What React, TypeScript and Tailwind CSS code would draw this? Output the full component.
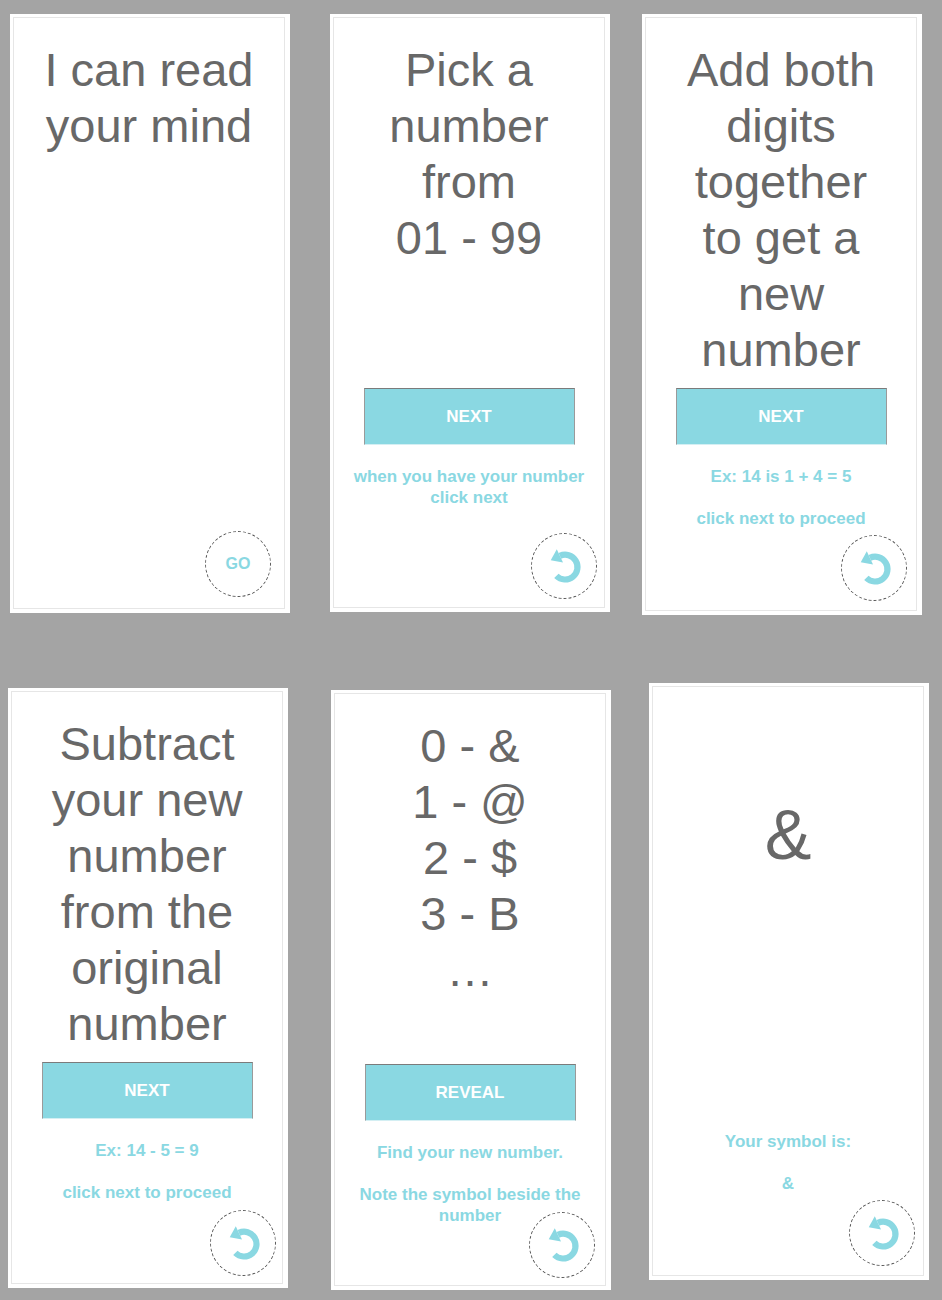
import React from 'react';

const font = { fontFamily: '"Liberation Sans", Arial, sans-serif' };

// circular "start over" arrow, arrowhead at upper left
const RestartIcon: React.FC = () => (
  <svg width="36" height="36" viewBox="0 0 32 32" fill="none">
    <path d="M12.35 7.03 A11 11 0 1 1 9.22 24.78" stroke="#8ad8e2" strokeWidth="5.5" />
    <polygon points="9.6,1.2 15.1,12.9 4.2,10.8" fill="#8ad8e2" />
  </svg>
);

const Circle: React.FC<{ className: string; children: React.ReactNode }> = ({ className, children }) => (
  <div
    className={`shrink-0 self-end w-[66px] h-[66px] rounded-full border border-dashed border-[#555] flex items-center justify-center ${className}`}
  >
    {children}
  </div>
);

const Card: React.FC<{ className: string; children: React.ReactNode }> = ({ className, children }) => (
  <div className={`w-[280px] bg-white pt-[3px] pl-[3px] pr-[5px] pb-[4px] ${className}`}>
    <div className="h-full border border-[#e6e6e6] flex flex-col">{children}</div>
  </div>
);

const Title: React.FC<{ lines: string[] }> = ({ lines }) => (
  <div className="shrink-0 h-[370px] pt-[24px] text-center text-[47px] leading-[56px] text-[#686868]">
    {lines.map((l) => (
      <div key={l}>{l}</div>
    ))}
  </div>
);

const Btn: React.FC<{ label: string }> = ({ label }) => (
  <button className="shrink-0 mx-auto w-[211px] h-[57px] bg-[#8ad8e2] border border-[#9a9a9a] border-t-[#7b7b7b] border-b-[#d4eff3] text-white font-bold text-[17px]">
    {label}
  </button>
);

const Notes: React.FC<{ paras: string[][]; className?: string }> = ({ paras, className = 'mt-[21px]' }) => (
  <div className={`shrink-0 flex flex-col gap-[21px] text-center text-[17px] leading-[21px] font-bold text-[#8ad8e2] ${className}`}>
    {paras.map((p, i) => (
      <div key={i}>
        {p.map((l) => (
          <div key={l}>{l}</div>
        ))}
      </div>
    ))}
  </div>
);

export default function App() {
  return (
    <div style={font} className="w-[942px] h-[1300px] bg-[#a4a4a4] overflow-hidden">
      <div className="flex items-start pt-[14px]">
        <Card className="ml-[10px] h-[599px]">
          <Title lines={['I can read', 'your mind']} />
          <Circle className="mt-auto mr-[13px] mb-[11px]">
            <span className="text-[16px] font-bold text-[#8ad8e2]">GO</span>
          </Circle>
        </Card>
        <Card className="ml-[40px] h-[598px]">
          <Title lines={['Pick a', 'number', 'from', '01 - 99']} />
          <Btn label="NEXT" />
          <Notes paras={[['when you have your number', 'click next']]} />
          <Circle className="mt-auto mr-[7px] mb-[8px]">
            <RestartIcon />
          </Circle>
        </Card>
        <Card className="ml-[32px] h-[601px]">
          <Title lines={['Add both', 'digits', 'together', 'to get a', 'new', 'number']} />
          <Btn label="NEXT" />
          <Notes paras={[['Ex: 14 is 1 + 4 = 5'], ['click next to proceed']]} />
          <Circle className="mt-auto mr-[9px] mb-[9px]">
            <RestartIcon />
          </Circle>
        </Card>
      </div>

      <div className="flex items-start mt-[68px]">
        <Card className="ml-[8px] mt-[5px] h-[600px]">
          <Title lines={['Subtract', 'your new', 'number', 'from the', 'original', 'number']} />
          <Btn label="NEXT" />
          <Notes paras={[['Ex: 14 - 5 = 9'], ['click next to proceed']]} />
          <Circle className="mt-auto mr-[6px] mb-[7px]">
            <RestartIcon />
          </Circle>
        </Card>
        <Card className="ml-[43px] mt-[7px] h-[600px]">
          <Title lines={['0 - &', '1 - @', '2 - $', '3 - B', '…']} />
          <Btn label="REVEAL" />
          <Notes paras={[['Find your new number.'], ['Note the symbol beside the', 'number']]} />
          <Circle className="-mt-[14px] mr-[10px]">
            <RestartIcon />
          </Circle>
        </Card>
        <Card className="ml-[38px] h-[597px]">
          <div className="shrink-0 pt-[108px] text-center text-[70px] leading-[80px] text-[#686868]">&amp;</div>
          <Notes className="mt-[256px]" paras={[['Your symbol is:'], ['&']]} />
          <Circle className="mt-auto mr-[8px] mb-[9px]">
            <RestartIcon />
          </Circle>
        </Card>
      </div>
    </div>
  );
}
